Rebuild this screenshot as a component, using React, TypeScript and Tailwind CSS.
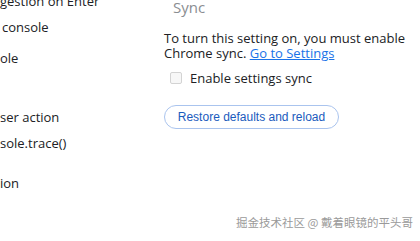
import React from 'react';

const leftRows: { text: string; top: string }[] = [
  { text: 'gestion on Enter', top: 'mt-[-8px]' },
  { text: 'console', top: 'mt-[8px] pl-[2px]' },
  { text: 'ole', top: 'mt-[13px]' },
  { text: 'ser action', top: 'mt-[41px]' },
  { text: 'sole.trace()', top: 'mt-[8px]' },
  { text: 'ion', top: 'mt-[22px]' },
];

export default function App() {
  return (
    <div className="relative h-[241px] w-[420px] overflow-hidden bg-white font-['Open_Sans','Noto_Sans',sans-serif] text-[13px] text-[#202124]">
      <div className="flex">
        <div className="flex w-[164px] shrink-0 flex-col">
          {leftRows.map(r => (
            <div key={r.text} className={`${r.top} h-[18px] leading-[18px] whitespace-nowrap`}>
              {r.text}
            </div>
          ))}
        </div>
        <div className="flex flex-col">
          <div className="mt-[-3px] ml-[9px] text-[15px] leading-[20px] text-[#8a8d91]">Sync</div>
          <div className="mt-[14px] leading-[15px]">
            <div>To turn this setting on, you must enable</div>
            <div>
              Chrome sync.{' '}
              <a href="#" className="text-[#1a73e8] underline">
                Go to Settings
              </a>
            </div>
          </div>
          <label className="mt-[10px] ml-[6px] flex items-center gap-[8px] text-[#202124]">
            <span className="h-[12px] w-[12px] rounded-[2px] border border-[#d3d3d3] bg-[#f7f7f7]" />
            <span className="leading-[14px]">Enable settings sync</span>
          </label>
          <button className="mt-[20px] h-[24px] w-[175px] rounded-full border border-[#aac4ee] bg-white font-['Liberation_Sans',Arial,sans-serif] text-[12px] text-[#1a5bbd]">
            Restore defaults and reload
          </button>
        </div>
      </div>
      <div className="absolute top-[214px] right-[7px] font-['Noto_Sans_CJK_SC',sans-serif] text-[11.5px] leading-[16px] text-[#9a9a9a]">
        掘金技术社区 @ 戴着眼镜的平头哥
      </div>
    </div>
  );
}
